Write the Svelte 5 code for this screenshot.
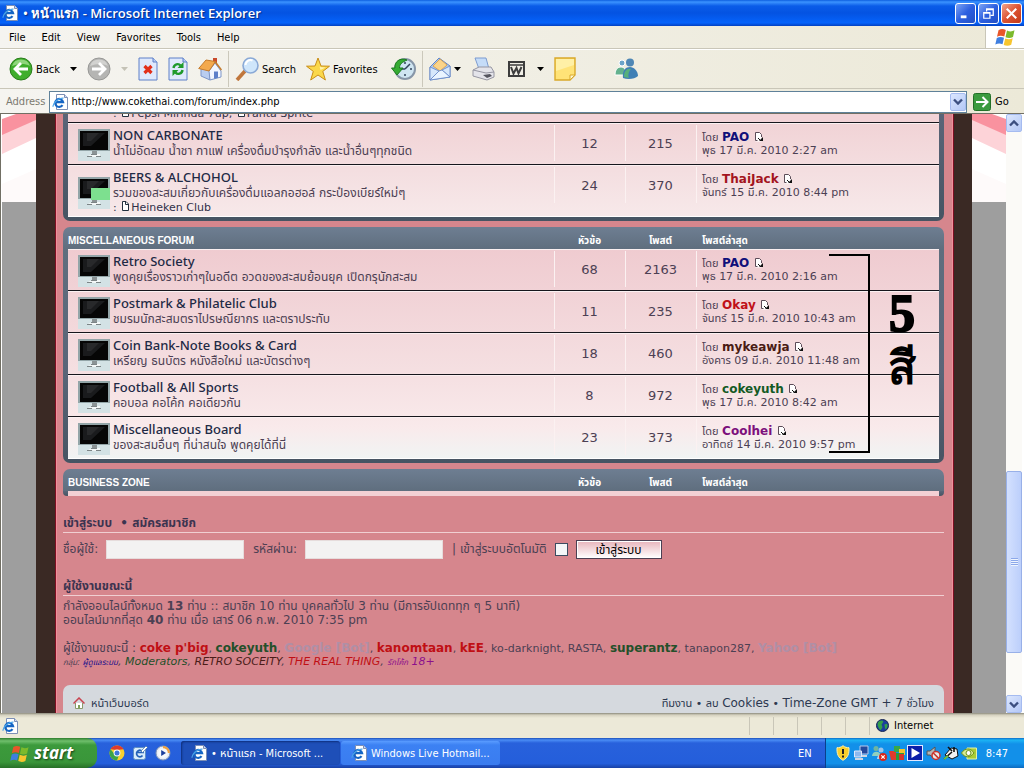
<script lang="ts">
  type Board = {
    name: string;
    desc: string;
    sub?: string;
    topics: number;
    posts: number;
    user: string;
    color: string;
    date: string;
  };

  const drinks: Board[] = [
    { name: 'NON CARBONATE', desc: 'น้ำไม่อัดลม น้ำชา กาแฟ เครื่องดื่มบำรุงกำลัง และน้ำอื่นๆทุกชนิด', topics: 12, posts: 215, user: 'PAO', color: '#10107a', date: 'พุธ 17 มี.ค. 2010 2:27 am' },
    { name: 'BEERS & ALCHOHOL', desc: 'รวมของสะสมเกี่ยวกับเครื่องดื่มแอลกอฮอล์ กระป๋องเบียร์ใหม่ๆ', sub: 'Heineken Club', topics: 24, posts: 370, user: 'ThaiJack', color: '#a31420', date: 'จันทร์ 15 มี.ค. 2010 8:44 pm' }
  ];

  const misc: Board[] = [
    { name: 'Retro Society', desc: 'พูดคุยเรื่องราวเก่าๆในอดีต อวดของสะสมย้อนยุค เปิดกรุนักสะสม', topics: 68, posts: 2163, user: 'PAO', color: '#10107a', date: 'พุธ 17 มี.ค. 2010 2:16 am' },
    { name: 'Postmark & Philatelic Club', desc: 'ชมรมนักสะสมตราไปรษณียากร และตราประทับ', topics: 11, posts: 235, user: 'Okay', color: '#c01018', date: 'จันทร์ 15 มี.ค. 2010 10:43 am' },
    { name: 'Coin Bank-Note Books & Card', desc: 'เหรียญ ธนบัตร หนังสือใหม่ และบัตรต่างๆ', topics: 18, posts: 460, user: 'mykeawja', color: '#4a1c14', date: 'อังคาร 09 มี.ค. 2010 11:48 am' },
    { name: 'Football & All Sports', desc: 'คอบอล คอโค้ก คอเดียวกัน', topics: 8, posts: 972, user: 'cokeyuth', color: '#145a24', date: 'พุธ 17 มี.ค. 2010 8:42 am' },
    { name: 'Miscellaneous Board', desc: 'ของสะสมอื่นๆ ที่น่าสนใจ พูดคุยได้ที่นี่', topics: 23, posts: 373, user: 'Coolhei', color: '#7c107c', date: 'อาทิตย์ 14 มี.ค. 2010 9:57 pm' }
  ];

  const menus = ['File', 'Edit', 'View', 'Favorites', 'Tools', 'Help'];

  let address = $state('http://www.cokethai.com/forum/index.php');
  let username = $state('');
  let password = $state('');
  let autologin = $state(false);
</script>

{#snippet iePage()}
  <svg class="i16" viewBox="0 0 16 16" aria-hidden="true">
    <path d="M4.500 .5h8l3 3v12h-11z" fill="#fff" stroke="#7d8fb5" />
    <path d="M12.500 .5v3h3" fill="#cfdcf3" stroke="#7d8fb5" />
    <path d="M10.500 11.200a4 4 0 1 1 .6-3H3.600" fill="none" stroke="#1565c4" stroke-width="2.200" />
    <path d="M1.200 12.800C.2 10 6 3.600 11.500 4.200" fill="none" stroke="#4aa3e8" stroke-width="1.200" />
  </svg>
{/snippet}

{#snippet arrow(color: string)}
  <svg class="arrow" viewBox="0 0 7 4" aria-hidden="true"><path d="M0 0h7L3.500 4z" fill={color} /></svg>
{/snippet}

{#snippet chevron(up: boolean)}
  <svg class="chev" viewBox="0 0 10 7" aria-hidden="true">
    <path d={up ? 'M1 5.500 5 1.500 9 5.500' : 'M1 1.500 5 5.500 9 1.500'} fill="none" stroke="#3c4f80" stroke-width="2.400" />
  </svg>
{/snippet}

{#snippet pageIcon()}
  <svg class="page-icon" viewBox="0 0 9 10" aria-hidden="true">
    <path d="M1.500 .5H5L7.500 3v6.500h-6z" fill="#fff" stroke="#23303f" />
    <path d="M4.500 .5v3h3" fill="none" stroke="#23303f" />
  </svg>
{/snippet}

{#snippet lastPost()}
  <svg class="last-icon" viewBox="0 0 10 10" aria-hidden="true">
    <path d="M1.500 .5h4l2 2v7h-6z" fill="#fff" />
    <path d="M7.500 5V2.500l-2-2h-4v8h2" fill="none" stroke="#5c4c58" />
    <path d="M9 5v4H5z" fill="#111" />
    <path d="m4 6 2 2" stroke="#111" />
  </svg>
{/snippet}

{#snippet monitor(hasSub: boolean)}
  <svg class="monitor" viewBox="0 0 32 32" aria-hidden="true">
    <rect width="32" height="32" fill="#d3e2e5" />
    <rect width="32" height="22" fill="#93a5a8" />
    <rect x="2" y="2" width="28" height="19" fill="#060606" />
    <path d="M5 4h22L13 17H5z" fill="#1a1b1d" />
    <path d="M9 4h12L13 12H9z" fill="#28292b" />
    <path d="M14 22h5v3h-5z" fill="#8b9395" />
    <path d="M10 27l4-2h8v2l-5 1z" fill="#f4f8f8" />
    <path d="M9 27.500h5M18 27.500h5M13 25.500h6" stroke="#7d8587" />
    {#if hasSub}<rect x="13" y="11" width="19" height="12" fill="#7de08f" />{/if}
  </svg>
{/snippet}

{#snippet flag()}
  <path d="M3.500 3.200C6 1.500 8.500 1.800 10.800 3L9.300 9.600C7 8.400 4.500 8.300 2 9.800z" fill="#e8562a" />
  <path d="M12 3.500c2.500 1.200 5 1.200 7.500-.2L18 10c-2.500 1.400-5 1.300-7.500.2z" fill="#7cba2c" />
  <path d="M1.800 11C4.300 9.500 6.800 9.600 9 10.800L7.500 17.300C5.200 16.200 2.800 16.300.3 17.600z" fill="#3f7fe0" />
  <path d="M10.200 11.400c2.500 1.100 5 1.200 7.500-.2l-1.500 6.600c-2.500 1.400-5 1.300-7.500.2z" fill="#f7c52e" />
{/snippet}

{#snippet headCells(title: string)}
  <thead>
    <tr>
      <th scope="col">{title}</th>
      <th class="count" scope="col">หัวข้อ</th>
      <th class="count" scope="col">โพสต์</th>
      <th class="last" scope="col">โพสต์ล่าสุด</th>
    </tr>
  </thead>
{/snippet}

{#snippet boardRow(b: Board)}
  <tr class:with-sub={b.sub}>
    <td>
      <div class="board">
        {@render monitor(!!b.sub)}
        <div>
          <a class="board-name" href="#board">{b.name}</a>
          <p class="desc">{b.desc}</p>
          {#if b.sub}<p class="sub">: {@render pageIcon()}<a href="#sub">{b.sub}</a></p>{/if}
        </div>
      </div>
    </td>
    <td class="count">{b.topics}</td>
    <td class="count">{b.posts}</td>
    <td class="last">
      <div>โดย <a class="user" href="#user" style="color: {b.color}">{b.user}</a> {@render lastPost()}</div>
      <div>{b.date}</div>
    </td>
  </tr>
{/snippet}

{#snippet gutter(side: string)}
  <div class="gutter {side}">
    <svg viewBox="0 0 34 88" preserveAspectRatio="none" aria-hidden="true">
      <rect width="34" height="88" fill="#fff" />
      <path d="M0 70 34 55v33H0z" fill="#fefafa" />
      <path d="M0 20 34 5v19L0 40z" fill="#fdd3d8" />
      <path d="M0 5 14 0h20v6L0 21z" fill="#f9929f" />
    </svg>
  </div>
{/snippet}

<div class="desktop">
  <header class="titlebar">
    {@render iePage()}
    <h1>• หน้าแรก - Microsoft Internet Explorer</h1>
    <button class="win" aria-label="Minimize"><svg viewBox="0 0 20 20"><path d="M5 13.500h6" stroke="#fff" stroke-width="3" /></svg></button>
    <button class="win" aria-label="Restore"><svg viewBox="0 0 20 20"><path d="M8 8V5h7v7h-3M8 5.800h7" fill="none" stroke="#fff" stroke-width="1.300" /><path d="M5 9h6.500v6H5zM5 9.700h6.500" fill="none" stroke="#fff" stroke-width="1.300" /></svg></button>
    <button class="win close" aria-label="Close"><svg viewBox="0 0 20 20"><path d="m5 5 10 10M15 5 5 15" stroke="#fff" stroke-width="2.200" /></svg></button>
  </header>

  <nav class="menubar">
    {#each menus as item}
      <button>{item}</button>
    {/each}
    <div class="brand"><svg viewBox="0 0 20 20" aria-hidden="true">{@render flag()}</svg></div>
  </nav>

  <div class="toolbar">
    <button>
      <svg class="i24" viewBox="0 0 24 24"><circle cx="12" cy="12" r="11" fill="#3fae2c" stroke="#2b7d1c" /><path d="M3 9a9.500 9.500 0 0 1 18 0C15 6 9 7 3 9z" fill="#8fd67c" /><path d="M19 12H7M12 6l-6 6 6 6" fill="none" stroke="#fff" stroke-width="2.800" /></svg>
      Back
    </button>
    {@render arrow('#000')}
    <button aria-label="Forward">
      <svg class="i24" viewBox="0 0 24 24"><circle cx="12" cy="12" r="11" fill="#b5b5b3" stroke="#989896" /><path d="M3 9a9.500 9.500 0 0 1 18 0C15 6 9 7 3 9z" fill="#d2d2d0" /><path d="M5 12h12M12 6l6 6-6 6" fill="none" stroke="#fff" stroke-width="2.800" /></svg>
    </button>
    {@render arrow('#c4c2b6')}
    <button aria-label="Stop">
      <svg class="i20" viewBox="0 0 20 24"><path d="M1 1h14l4 4v18H1z" fill="#dfe9fc" stroke="#5f80c8" /><path d="M15 1v4h4" fill="#b9cdf3" stroke="#5f80c8" /><path d="m6.500 9 7 7M13.500 9l-7 7" stroke="#e2301a" stroke-width="3.200" /></svg>
    </button>
    <button aria-label="Refresh">
      <svg class="i20" viewBox="0 0 20 24"><path d="M1 1h14l4 4v18H1z" fill="#dfe9fc" stroke="#5f80c8" /><path d="M15 1v4h4" fill="#b9cdf3" stroke="#5f80c8" /><path d="M5.500 11c.5-4 5-5 7-2.500M14.500 13c-.5 4-5 5-7 2.500" fill="none" stroke="#1f9a2b" stroke-width="2.400" /><path d="M15.500 5v6h-6zM4.500 19v-6h6z" fill="#1f9a2b" /></svg>
    </button>
    <button aria-label="Home">
      <svg class="i24" viewBox="0 0 24 24"><path d="M15 1h4v8h-4z" fill="#c94a2b" /><path d="m3 11 8-4 1 16-9-4z" fill="#b9cdf0" stroke="#7c95c8" /><path d="m11 14 6-8 6 8v6l-11 3z" fill="#f2f6ff" stroke="#7c95c8" /><path d="M.7 11.500 8 3l9.500 1.500L11 14z" fill="#f3a94e" stroke="#c47a2b" /><path d="m17 4.500 6.500 8.500" stroke="#c47a2b" stroke-width="1.500" /><path d="M16 14.500h4v6.200l-4 1z" fill="#5d7fc9" /></svg>
    </button>
    <span class="sep"></span>
    <button>
      <svg class="i24" viewBox="0 0 24 24"><path d="m10 14-8 9" stroke="#c0763c" stroke-width="3.600" /><circle cx="15.500" cy="8.500" r="7.500" fill="#cfe6fb" stroke="#8aa9d6" stroke-width="1.600" /><path d="M10.500 8a5 5 0 0 1 7-4.500" fill="none" stroke="#fff" stroke-width="2" /></svg>
      Search
    </button>
    <button>
      <svg class="i24" viewBox="0 0 24 24"><path d="m12 1 3 8 8.500.2-6.700 5.200 2.600 8.600L12 18l-7.300 5 2.600-8.600L.5 9.200 9 9z" fill="#fbd84a" stroke="#c98d17" /><path d="m12 4 1.800 6 5.700.4-5 2.600z" fill="#fff3b0" /></svg>
      Favorites
    </button>
    <button aria-label="History">
      <svg class="i28" viewBox="0 0 28 24"><circle cx="17" cy="12" r="10" fill="#cfe5f2" stroke="#8796a8" stroke-width="2" /><path d="M17 5v2M17 17v2M24 12h-2M17 12l5-5M17 12h-4" stroke="#33445c" stroke-width="1.500" /><path d="M19 3C12 0 6 5 7 11H3.500l5.500 7 6-7h-3.500c0-4 3-6 7.500-8z" fill="#35ab32" stroke="#1c7a20" /></svg>
    </button>
    <span class="sep"></span>
    <button aria-label="Mail">
      <svg class="i22" viewBox="0 0 22 24"><path d="m1 10 9-9 11 8v11L1 23z" fill="#a7c6f0" stroke="#6487c6" /><path d="m4 9 7-7 7 6-7 6z" fill="#fbd489" stroke="#d99a3f" stroke-width=".8" /><path d="M1 10v13l9-9zM21 9v11l-8-7z" fill="#d6e7fb" stroke="#6487c6" stroke-width=".8" /><path d="m1 23 9-9 3-1 8 7z" fill="#eaf4ff" stroke="#6487c6" stroke-width=".8" /></svg>
      {@render arrow('#000')}
    </button>
    <button aria-label="Print">
      <svg class="i24" viewBox="0 0 24 24"><path d="M4 1h11l3 11H8z" fill="#c5dcf8" stroke="#7c9bd0" /><path d="m2 13 6-3h12l3 5v5l-7 3-14-4z" fill="#e4e4ea" stroke="#9696a2" /><path d="m2 13 13 3 8-1" fill="none" stroke="#9696a2" /><path d="m12 18 7-1 2 2-5 2z" fill="#55555f" /></svg>
    </button>
    <button aria-label="Edit with Word">
      <svg class="i22" viewBox="0 0 22 24"><rect x="4" y="5" width="15" height="14" fill="#f1efe7" stroke="#3d3d3d" stroke-width="2" /><path d="M5 8h13" stroke="#3d3d3d" stroke-width="1.500" /><path d="m6 10 2.500 6.500L11.500 11l2 5.500 3-6.500" fill="none" stroke="#3d3d3d" stroke-width="2" /></svg>
    </button>
    {@render arrow('#000')}
    <button aria-label="Notes">
      <svg class="i22" viewBox="0 0 22 24"><path d="M1 1h20v17l-5 5H1z" fill="#ffe377" stroke="#d9a92b" stroke-width="1.400" /><path d="M2 2h18v6L2 14z" fill="#fff0a6" /><path d="M21 18h-5v5z" fill="#fff6cf" stroke="#d9a92b" /></svg>
    </button>
    <button class="messenger" aria-label="Messenger">
      <svg class="i24" viewBox="0 0 24 24"><circle cx="8" cy="6" r="3" fill="#6ba4c9" stroke="#fff" /><path d="M1 18c0-6 3-8 6-8s5 2 5 8z" fill="#64b18e" stroke="#fff" /><circle cx="16" cy="5.500" r="4" fill="#4f87b5" /><path d="M9 21c-1-8 3-11 7-11s8 4 8 9c-3 3-10 4-15 2z" fill="#3f7fb5" /><path d="M10 20c0-6 3-9 7-8-3 3-3 7-2 9z" fill="#57b07c" /></svg>
    </button>
  </div>

  <div class="addressbar">
    <label for="address">Address</label>
    <div class="combo">
      {@render iePage()}
      <input id="address" type="text" bind:value={address} />
      <button class="xp" aria-label="Show addresses">{@render chevron(false)}</button>
    </div>
    <button class="go">
      <svg viewBox="0 0 18 18" aria-hidden="true"><rect x=".5" y=".5" width="17" height="17" rx="2" fill="#3b9b3f" stroke="#237028" /><path d="M3 9h11M9.500 4l5 5-5 5" fill="none" stroke="#fff" stroke-width="2" /></svg>
      Go
    </button>
  </div>

  <div class="viewport">
    {@render gutter('left')}
    <main class="page">
      <section class="forum cut">
        <div class="clip"><p class="sub">: {@render pageIcon()}<a href="#pepsi">Pepsi Mirinda 7up</a>, {@render pageIcon()}<a href="#fanta">Fanta Sprite</a></p></div>
        <table>
          <tbody>
            {#each drinks as b}{@render boardRow(b)}{/each}
          </tbody>
        </table>
      </section>

      <section class="forum">
        <table>
          {@render headCells('MISCELLANEOUS FORUM')}
          <tbody>
            {#each misc as b}{@render boardRow(b)}{/each}
          </tbody>
        </table>
        <div class="bracket"></div>
        <div class="note"><span class="digit">5</span><span>สี</span></div>
      </section>

      <section class="forum closed">
        <table>{@render headCells('BUSINESS ZONE')}</table>
        <div class="strip"></div>
      </section>

      <form class="login" onsubmit={(e) => e.preventDefault()}>
        <h3><a href="#login">เข้าสู่ระบบ</a> &nbsp;•&nbsp;<a href="#register">สมัครสมาชิก</a></h3>
        <div class="fields">
          <label for="username">ชื่อผู้ใช้:</label>
          <input id="username" type="text" bind:value={username} />
          <label class="second" for="password">รหัสผ่าน:</label>
          <input id="password" type="password" bind:value={password} />
          <label class="second" for="autologin">| เข้าสู่ระบบอัตโนมัติ</label>
          <input id="autologin" type="checkbox" bind:checked={autologin} />
          <button>เข้าสู่ระบบ</button>
        </div>
      </form>

      <section class="online">
        <h3>ผู้ใช้งานขณะนี้</h3>
        <p>กำลังออนไลน์ทั้งหมด <b>13</b> ท่าน :: สมาชิก 10 ท่าน บุคคลทั่วไป 3 ท่าน (มีการอัปเดททุก ๆ 5 นาที)<br />ออนไลน์มากที่สุด <b>40</b> ท่าน เมื่อ เสาร์ 06 ก.พ. 2010 7:35 pm</p>
        <p class="users"><span class="big">ผู้ใช้งานขณะนี้ :</span> <b class="red">coke p'big</b>, <b class="green">cokeyuth</b>, <b class="bot">Google [Bot]</b>, <b class="red">kanomtaan</b>, <b class="red">kEE</b>, ko-darknight, RASTA, <b class="green">superantz</b>, tanapon287, <b class="bot">Yahoo [Bot]</b></p>
        <p class="groups"><small>กลุ่ม: <a class="navy" href="#admin">ผู้ดูแลระบบ</a></small>, <a class="green" href="#mods">Moderators</a>, <a class="brown" href="#retro">RETRO SOCEITY</a>, <a class="red" href="#real">THE REAL THING</a>, <a class="purple" href="#g18"><small>รักโค้ก</small> 18+</a></p>
      </section>

      <footer class="foot">
        <svg viewBox="0 0 12 12" aria-hidden="true"><path d="M2.500 6v5.500h7V6" fill="#fff" stroke="#8a9a6c" /><path d="M.5 6.500 6 1l5.500 5.500" fill="none" stroke="#c8434f" stroke-width="1.500" /><path d="M5 8h2v3.500H5z" fill="#7fa05a" /></svg>
        <a href="#home">หน้าเว็บบอร์ด</a>
        <span class="links"><a href="#team">ทีมงาน</a> • <a href="#cookies">ลบ <span class="big">Cookies</span></a> • <span class="big">Time-Zone GMT + 7</span> ชั่วโมง</span>
      </footer>
    </main>
    {@render gutter('right')}
    <div class="scrollbar">
      <button class="xp" aria-label="Scroll up">{@render chevron(true)}</button>
      <div class="before"></div>
      <div class="thumb"><i></i></div>
      <div class="after"></div>
      <button class="xp" aria-label="Scroll down">{@render chevron(false)}</button>
    </div>
  </div>

  <div class="statusbar">
    {@render iePage()}
    <span class="fill"></span>
    <span class="pane"></span><span class="pane"></span><span class="pane"></span><span class="pane"></span><span class="pane"></span>
    <span class="zone">
      <svg viewBox="0 0 14 14" aria-hidden="true"><circle cx="7" cy="7" r="6.500" fill="#1c3f9c" stroke="#101f4d" /><path d="M2 4c2-3 5-3 6-1L6 6l1 3-2 3C3 10 1 7 2 4zM9 6l3-1c1 3 0 5-2 6z" fill="#35a04a" /></svg>
      Internet
    </span>
  </div>

  <div class="taskbar">
    <button class="start">
      <svg viewBox="0 0 20 20" aria-hidden="true">{@render flag()}</svg>
      start
    </button>
    <div class="quick">
      <button aria-label="Chrome"><svg class="i16" viewBox="0 0 16 16"><circle cx="8" cy="8" r="7.500" fill="#f7cf2f" /><path d="M1.500 4.300a7.500 7.500 0 0 1 13 0L8 5z" fill="#de3b2c" /><path d="M1.500 4.300A7.500 7.500 0 0 0 8 15.500L10 10 6 9.500z" fill="#3ba548" /><circle cx="8" cy="8" r="3.400" fill="#fff" /><circle cx="8" cy="8" r="2.500" fill="#3c78d8" /></svg></button>
      <button aria-label="Show Desktop"><svg class="i16" viewBox="0 0 16 16"><rect x="1.500" y="2.500" width="12" height="12" rx="2" fill="#d8ecfb" stroke="#5e8fc4" /><path d="M10.500 10.500A3.300 3.300 0 1 1 11 7.500H5" fill="none" stroke="#2462b8" stroke-width="1.700" /><path d="m9 6 5-5 1.500 1.500-5 5z" fill="#fff" stroke="#3e6ea4" stroke-width=".7" /></svg></button>
      <button aria-label="Media Player"><svg class="i16" viewBox="0 0 16 16"><circle cx="8" cy="8" r="7" fill="#e8edf5" stroke="#7f94b8" /><path d="M8 1a7 7 0 0 1 7 7H8z" fill="#f0a040" /><circle cx="8" cy="8" r="4.800" fill="#f5f8fc" /><path d="M6.200 5v6L11 8z" fill="#1c3f9c" /></svg></button>
    </div>
    <button class="task active">{@render iePage()} • หน้าแรก - Microsoft ...</button>
    <button class="task">{@render iePage()} Windows Live Hotmail...</button>
    <span class="fill"></span>
    <span class="lang">EN</span>
    <div class="tray">
      <svg class="i16" viewBox="0 0 16 16"><path d="M8 .7c2 1.600 4 2 6 2 .3 6-1 10-6 12.600C3 12.700 1.700 8.700 2 2.700c2 0 4-.4 6-2z" fill="#f8cf2c" stroke="#fff0a8" /><path d="M8 4v5M8 10.500v2" stroke="#222" stroke-width="2" /></svg>
      <svg class="i16" viewBox="0 0 16 16"><path d="M7 1h8v8H7z" fill="#23499c" stroke="#b9c9ea" /><path d="M1.500 6h7v6h-7z" fill="#8db8ee" stroke="#dfe9fb" /><path d="M2 14h8M9 11h5" stroke="#cfd6e2" stroke-width="2" /></svg>
      <svg class="i16" viewBox="0 0 16 16"><circle cx="5" cy="3.500" r="2.500" fill="#6fb5a0" /><path d="M1 11c0-5 8-6 9 0z" fill="#8fd0bf" /><circle cx="10" cy="5" r="2.500" fill="#9cc4ea" /><path d="M6 14c0-6 8-6 9 0z" fill="#b5d4f2" /><circle cx="12" cy="12" r="4" fill="#d9261c" /><path d="m10.300 10.300 3.400 3.400m0-3.400-3.400 3.400" stroke="#fff" stroke-width="1.200" /></svg>
      <svg class="i16" viewBox="0 0 16 16"><path d="M0 6h7v9H2z" fill="#e03a2c" /><path d="M5 1h6v6H5z" fill="#35a84a" /><path d="M10 4h6v6h-6z" fill="#f4c42c" /><path d="M7 8h8v7H7z" fill="#2a9c3c" /><path d="M10 9h5v6h-5z" fill="#d6342a" /></svg>
      <svg class="i16" viewBox="0 0 16 16"><rect x=".5" y=".5" width="15" height="15" fill="#0c1fa8" stroke="#e4e8ff" /><path d="M4.500 3v10L13 8z" fill="#fff" /></svg>
      <svg class="i16" viewBox="0 0 16 16"><path d="M2 6h3l5-4v12L5 10H2z" fill="#b5b5b5" stroke="#555" /><circle cx="11" cy="10.500" r="4" fill="#e8e8e8" stroke="#c8322a" stroke-width="1.500" /><path d="m8.300 8 5.400 5.400" stroke="#c8322a" stroke-width="1.500" /></svg>
      <svg class="i16" viewBox="0 0 16 16"><path d="m2 10 6-7 6 1 1 7-6 3z" fill="#f2f2f2" stroke="#111" /><path d="M1 14 9 7M5 2l4 4M11 2v5" stroke="#111" stroke-width="1.600" /><path d="m1 14 4-3" stroke="#6dc03c" stroke-width="2" /></svg>
      <svg class="i16" viewBox="0 0 16 16"><path d="M6 3h9.500v11H6z" fill="#a9cc35" stroke="#e3f2a8" /><path d="M.5 8C4 2.500 10 3 13 8 9 13 4 13 .5 8z" fill="#d7eb92" stroke="#6d9218" /><circle cx="7.500" cy="8" r="2.500" fill="#fff" stroke="#6d9218" /></svg>
      <time>8:47</time>
    </div>
  </div>
</div>

<style>
  :global(body) {
    background: #9e9e9e;
  }

  .desktop {
    display: flex;
    flex-direction: column;
    height: 100vh;
    overflow: hidden;
    font-family: 'DejaVu Sans Condensed', Tahoma, 'Noto Sans Thai', sans-serif;
    font-size: 11px;
    color: #000;
  }

  button {
    font: inherit;
    color: inherit;
    background: none;
    border: 0;
    padding: 0;
  }

  a {
    color: inherit;
    text-decoration: none;
  }

  h1, h3, p {
    margin: 0;
  }

  svg {
    display: block;
    flex: none;
  }

  .i16 { width: 16px; height: 16px; }
  .i20 { width: 20px; height: 24px; }
  .i22 { width: 22px; height: 24px; }
  .i24 { width: 24px; height: 24px; }
  .i28 { width: 28px; height: 24px; }
  .arrow { width: 7px; height: 4px; }
  .chev { width: 10px; height: 7px; }
  .fill { flex: 1; }
  .big { font-size: 12px; }

  /* window chrome */
  .titlebar {
    display: flex;
    align-items: center;
    gap: 2px;
    flex: none;
    height: 26px;
    padding: 0 2px;
    background: linear-gradient(#0d5fe0 0, #3b93ff 2px, #0a5ce8 6px, #0453e2 50%, #0563fb 88%, #0340c0 100%);
  }

  .titlebar h1 {
    flex: 1;
    padding-left: 3px;
    font: 600 13px/18px 'Open Sans', 'Trebuchet MS', sans-serif;
    color: #fff;
    text-shadow: 1px 1px 1px #0a2a80;
  }

  .win {
    width: 21px;
    height: 21px;
    border: 1px solid #fff;
    border-radius: 3px;
    background: linear-gradient(135deg, #7da4f4, #2c5fe0 50%, #2350c4);
  }

  .close {
    background: linear-gradient(135deg, #f0a48c, #dc5332 50%, #c43a18);
  }

  .menubar {
    display: flex;
    flex: none;
    height: 22px;
    padding-left: 1px;
    background: linear-gradient(90deg, #f5f4f0, #ece9d8);
    border-bottom: 1px solid #c9c6b8;
  }

  .menubar button {
    padding: 0 8px;
  }

  .brand {
    display: flex;
    justify-content: center;
    align-items: center;
    width: 38px;
    margin-left: auto;
    background: #fff;
    border-left: 1px solid #c9c6b8;
  }

  .brand svg {
    width: 20px;
    height: 20px;
  }

  .toolbar {
    display: flex;
    align-items: center;
    gap: 10px;
    flex: none;
    height: 40px;
    padding-left: 9px;
    background: linear-gradient(90deg, #f5f4f0, #ece9d8);
    border-top: 1px solid #fff;
    border-bottom: 1px solid #c9c6b8;
    box-sizing: border-box;
  }

  .toolbar button {
    display: flex;
    align-items: center;
    gap: 3px;
  }

  .sep {
    width: 1px;
    height: 36px;
    margin: 0 -4px;
    background: #cbc8bb;
  }

  .toolbar .messenger {
    margin-left: 28px;
  }

  .addressbar {
    display: flex;
    align-items: center;
    flex: none;
    height: 25px;
    padding: 1px 0 0 6px;
    background: linear-gradient(90deg, #f5f4f0, #ece9d8);
    border-bottom: 1px solid #716f64;
    box-sizing: border-box;
  }

  .addressbar label {
    color: #7c7a70;
  }

  .combo {
    display: flex;
    align-items: center;
    flex: 1;
    height: 20px;
    margin-left: 4px;
    padding: 0 0 0 2px;
    background: #fff;
    border: 1px solid #5f8199;
  }

  .combo input {
    flex: 1;
    min-width: 0;
    padding: 0 0 0 3px;
    border: 0;
    outline: 0;
    background: none;
    font: inherit;
  }

  .xp {
    display: flex;
    align-items: center;
    justify-content: center;
    flex: none;
    width: 16px;
    height: 18px;
    background: linear-gradient(135deg, #dbe6fe, #b4c8f6);
    border: 1px solid #a5bbf0;
    border-radius: 2px;
    box-sizing: border-box;
  }

  .go {
    display: flex;
    align-items: center;
    gap: 4px;
    width: 51px;
    margin-left: 6px;
  }

  .go svg {
    width: 18px;
    height: 18px;
  }

  /* page */
  .viewport {
    display: flex;
    flex: 1;
    min-height: 0;
    padding: 0 2px 0 1px;
    background: #fff;
    border-left: 1px solid #716f64;
    overflow: hidden;
  }

  .gutter {
    flex: 0 0 34px;
    background: #9e9e9e;
  }

  .gutter svg {
    width: 100%;
    height: 88px;
  }

  .gutter.right {
    transform: scaleX(-1);
  }

  .page {
    flex: 1;
    min-width: 0;
    height: 100%;
    padding: 0 10px 0 8px;
    overflow: hidden;
    background: #d6868d;
    border: solid #3a2924;
    border-width: 0 18px 0 19px;
    box-shadow: inset 1px 0 #7c0f22, inset 2px 0 #f0909c, inset -1px 0 #7c0f22, inset -2px 0 #f0909c;
    box-sizing: border-box;
    font-family: 'DejaVu Sans', Verdana, 'Noto Sans Thai', sans-serif;
    color: #4c4053;
  }

  .forum {
    position: relative;
    margin-bottom: 6px;
    padding: 0 5px 4px;
    background: linear-gradient(#6e7e92, #5f6e7e 22px, #5a6578 60%, #465463);
    border-radius: 7px;
  }

  .forum.cut {
    border-radius: 0 0 7px 7px;
    background: linear-gradient(#5a6578, #465463);
  }

  .clip {
    display: flex;
    align-items: flex-end;
    height: 9px;
    padding: 0 0 2px 45px;
    overflow: hidden;
    background: #f2d3d7;
    border-bottom: 1px solid #16161c;
    box-sizing: border-box;
  }

  table {
    width: 100%;
    table-layout: fixed;
    border-collapse: separate;
    border-spacing: 0;
  }

  tbody {
    background: linear-gradient(#efcbd0, #f5e0e2 60%, #f9eaeb 85%, #f0f4f4);
  }

  .cut tbody {
    background: linear-gradient(#f1d3d6, #f7e9ea);
  }

  tbody tr {
    height: 42px;
  }

  tbody tr.with-sub {
    height: 52px;
  }

  th, td {
    padding: 0;
    text-align: left;
    box-sizing: border-box;
  }

  td {
    vertical-align: top;
    border-top: 1px solid #fbf0f1;
    border-bottom: 1px solid #16161c;
  }

  tbody tr:last-child td {
    border-bottom-color: #fff;
  }

  tr > .count {
    width: 71px;
    text-align: center;
  }

  tr > .last {
    width: 243px;
    padding-left: 6px;
  }

  td.count, td.last {
    background: linear-gradient(#fbf1f1, #fbf1f1) 0 1px / 1px 36px no-repeat;
  }

  td.count {
    padding-top: 11px;
    font-size: 13px;
    line-height: 18px;
  }

  tr > td.last {
    padding-top: 7px;
  }

  th {
    height: 22px;
    padding-top: 6px;
    font: bold 10px/16px 'Liberation Sans', Arial, 'Noto Sans Thai', sans-serif;
    color: #fff;
  }

  .board {
    display: flex;
    align-items: center;
    gap: 3px;
    padding: 3px 0 0 10px;
  }

  .monitor {
    width: 32px;
    height: 32px;
    margin-top: 2px;
  }

  .board > div {
    align-self: flex-start;
  }

  .board-name {
    display: block;
    font: 500 13px/17px 'Noto Sans', 'Trebuchet MS', sans-serif;
    color: #1e2a45;
  }

  .desc {
    font-size: 12px;
    line-height: 15px;
    white-space: nowrap;
  }

  .sub {
    font-size: 11px;
    line-height: 12px;
    color: #303048;
  }

  .page-icon {
    display: inline-block;
    width: 9px;
    height: 10px;
    margin: 0 1px;
  }

  .last-icon {
    display: inline-block;
    width: 10px;
    height: 10px;
    margin-left: 1px;
    vertical-align: -1px;
  }

  td.last div {
    line-height: 13px;
    white-space: nowrap;
  }

  .user {
    font-size: 12px;
    font-weight: bold;
    line-height: 12px;
  }

  /* marks drawn over the last-post column */
  .bracket {
    position: absolute;
    top: 27px;
    right: 74px;
    width: 39px;
    height: 195px;
    border: solid #000;
    border-width: 2px 2px 2px 0;
  }

  .note {
    position: absolute;
    top: 58px;
    right: 24px;
    width: 36px;
    display: flex;
    flex-direction: column;
    font: bold 46px/52px 'Liberation Serif', serif;
    text-align: center;
    color: #000;
  }

  .note .digit {
    font-size: 52px;
    line-height: 58px;
    -webkit-text-stroke: 2px #000;
  }

  .forum.closed {
    padding-bottom: 0;
    border-radius: 7px 7px 4px 4px;
  }

  .strip {
    height: 5px;
    background: #f3d0d4;
  }

  h3 {
    font-size: 12px;
    line-height: 18px;
    border-bottom: 1px solid #f0cfd2;
    color: #3c3450;
  }

  .login {
    margin-top: 18px;
  }

  .fields {
    display: flex;
    align-items: center;
    gap: 8px;
    height: 32px;
    font-size: 12px;
  }

  .fields .second {
    margin-left: 1px;
  }

  .fields input {
    width: 138px;
    height: 19px;
    padding: 0 3px;
    background: #f3f2f2;
    border: 1px solid #e6dcdc;
    box-sizing: border-box;
    font: inherit;
  }

  .fields input[type='checkbox'] {
    appearance: none;
    width: 13px;
    height: 13px;
    margin: 0;
    background: #f4f7f7;
    border: 1px solid #3c4c60;
  }

  .fields button {
    width: 86px;
    height: 19px;
    background: linear-gradient(#e8b4bb, #fff);
    border: 1px solid #4c4053;
    box-shadow: inset 0 0 0 1px #fff;
    color: #000;
  }

  .online {
    margin-top: 12px;
  }

  .online p {
    font-size: 12px;
    line-height: 14px;
  }

  .online h3 {
    margin-bottom: 3px;
  }

  .online .users {
    margin-top: 14px;
    font-size: 11px;
  }

  .users b {
    font-size: 12px;
  }

  .online .groups {
    font-size: 11px;
    line-height: 11px;
    font-style: italic;
  }

  small {
    font-size: 8px;
  }

  .red { color: #c00f14; }
  .green { color: #24502a; }
  .bot { color: #b08fa6; }
  .navy { color: #20108c; }
  .brown { color: #4a1c18; }
  .purple { color: #8c108c; }

  .foot {
    display: flex;
    align-items: center;
    gap: 6px;
    height: 36px;
    margin-top: 17px;
    padding: 0 10px;
    background: #d5d9de;
    border-radius: 7px;
    color: #2c3850;
  }

  .foot svg {
    width: 12px;
    height: 12px;
  }

  .links {
    margin-left: auto;
  }

  .scrollbar {
    display: flex;
    flex-direction: column;
    flex: 0 0 16px;
    background: #fbfaf7;
  }

  .before { flex: 341; }
  .after { flex: 42; }

  .thumb {
    display: flex;
    align-items: center;
    justify-content: center;
    flex: 182;
    background: linear-gradient(90deg, #d3e0fe, #bccffb);
    border: 1px solid #98b0e8;
    border-radius: 2px;
  }

  .thumb i {
    width: 7px;
    height: 8px;
    background: repeating-linear-gradient(#8ca8ea 0 1px, #eef4fe 1px 2px);
  }

  /* bottom bars */
  .statusbar {
    display: flex;
    align-items: center;
    flex: none;
    height: 25px;
    padding-left: 2px;
    background: linear-gradient(#8c8a7c, #d5d1bf 2px, #ece9d8 5px, #ece9d8);
    box-sizing: border-box;
  }

  .pane {
    width: 23px;
    height: 18px;
    border-left: 1px solid #c9c6b8;
  }

  .zone {
    display: flex;
    align-items: center;
    gap: 5px;
    width: 148px;
    height: 18px;
    padding-left: 6px;
    border-left: 1px solid #c9c6b8;
  }

  .zone svg {
    width: 13px;
    height: 13px;
  }

  .taskbar {
    display: flex;
    align-items: stretch;
    flex: none;
    height: 30px;
    background: linear-gradient(#1c4fb8 0, #4a8df5 2px, #2861dc 5px, #245edb 85%, #1941a5 100%);
    color: #fff;
  }

  .start {
    display: flex;
    align-items: center;
    gap: 5px;
    width: 97px;
    padding-left: 10px;
    background: linear-gradient(#2d7d2d 0, #6fbf6c 3px, #3c9a3c 7px, #3a963a 80%, #277027 100%);
    border-radius: 0 10px 10px 0;
    font: italic bold 17px/24px 'Open Sans', 'Noto Sans', sans-serif;
    text-shadow: 1px 1px 2px #173f17;
  }

  .start svg {
    width: 19px;
    height: 19px;
  }

  .quick {
    display: flex;
    align-items: center;
    gap: 7px;
    padding: 0 10px 0 12px;
  }

  .task {
    display: flex;
    align-items: center;
    gap: 4px;
    width: 159px;
    margin: 3px 1px 3px 0;
    padding-left: 10px;
    background: linear-gradient(#5a9cff, #3c81f3 4px, #3a7cf0);
    border-radius: 3px;
    white-space: nowrap;
  }

  .task.active {
    background: #1e4fb8;
    box-shadow: inset 1px 1px 2px #0e2f7c;
  }

  .lang {
    align-self: center;
    margin-right: 13px;
  }

  .tray {
    display: flex;
    align-items: center;
    gap: 2px;
    padding: 0 16px 0 9px;
    background: linear-gradient(#0e6cc8 0, #1cb4f4 2px, #1290e9 6px, #1290e9 85%, #0d6bc0 100%);
    border-left: 1px solid #0a3f8c;
  }

  .tray time {
    padding-left: 7px;
  }
</style>
